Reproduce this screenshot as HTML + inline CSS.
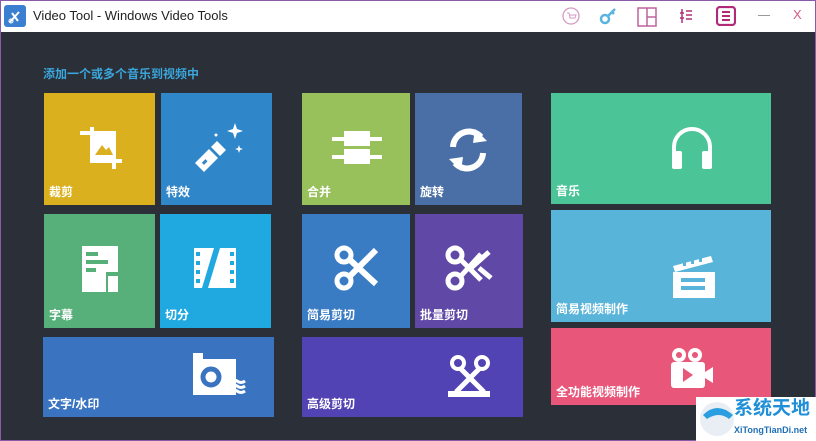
<!DOCTYPE html>
<html><head><meta charset="utf-8"><style>
*{margin:0;padding:0;box-sizing:border-box}
html,body{width:816px;height:441px;overflow:hidden}
body{background:#2b2f37;font-family:"Liberation Sans","Noto Sans CJK SC",sans-serif;position:relative}
#frame{position:absolute;left:0;top:0;width:816px;height:441px;border:1px solid #8a5aa8;pointer-events:none;z-index:9}
#title{position:absolute;left:0;top:0;width:816px;height:32px;background:#fff}
#title .t{position:absolute;left:33px;top:8px;font-size:13px;color:#222}
.tile{position:absolute;color:#fff}
.tile span{position:absolute;left:5px;bottom:5px;font-size:12px;font-weight:bold;white-space:nowrap}
.tile svg{position:absolute}
#head{position:absolute;left:43px;top:65px;color:#3aa6dc;font-size:12px;font-weight:bold}
</style></head><body>
<div id="title">
<svg style="position:absolute;left:4px;top:5px" width="22" height="22"><rect width="22" height="22" rx="3" fill="#3a7fd0"/><path d="M6 17l9-10M8 8l6 8" stroke="#fff" stroke-width="2"/><circle cx="7" cy="16" r="2" fill="none" stroke="#fff"/></svg>
<div class="t">Video Tool - Windows Video Tools</div>
<svg style="position:absolute;left:562px;top:7px" width="18" height="18"><circle cx="9" cy="9" r="8" fill="none" stroke="#d49ac4" stroke-width="1.3"/><path d="M5 6h2l1 5h5l1-3H8" fill="none" stroke="#d49ac4"/></svg>
<svg style="position:absolute;left:598px;top:6px" width="20" height="20"><circle cx="7" cy="13" r="4" fill="none" stroke="#5bb4e0" stroke-width="2.5"/><path d="M10 10l7-7M14 6l2 2" stroke="#5bb4e0" stroke-width="2.5"/></svg>
<svg style="position:absolute;left:637px;top:7px" width="20" height="20"><rect x="1" y="1" width="18" height="18" fill="none" stroke="#c0609e" stroke-width="1.5"/><path d="M10 1v18M10 10h9" stroke="#c0609e" stroke-width="1.5"/></svg>
<svg style="position:absolute;left:679px;top:8px" width="14" height="16"><path d="M3 1v14M7 3h6M7 7h6M7 11h6M1 5h4M1 10h4" stroke="#b0307a" stroke-width="1.5"/></svg>
<svg style="position:absolute;left:716px;top:6px" width="20" height="20"><rect x="1" y="1" width="18" height="18" rx="3" fill="none" stroke="#b02a78" stroke-width="2.2"/><path d="M6 6h8M6 10h8M6 14h8" stroke="#b02a78" stroke-width="2"/></svg>
<div style="position:absolute;left:758px;top:15px;width:12px;height:1px;background:#999"></div>
<div style="position:absolute;left:793px;top:7px;font-size:13px;color:#d06080">X</div>
</div>
<div id="head">添加一个或多个音乐到视频中</div>

<div class="tile" style="left:44px;top:93px;width:111px;height:112px;background:#dbb01e">
<svg style="left:32px;top:32px" width="50" height="50"><path d="M4 6h10V2h4v4h22v28h6v4h-6v6h-4v-6H14V10H4z" fill="#fff"/><path d="M18 10h18v24H18z" fill="#fff"/><path d="M19 30l7-10 4 5 3-3 4 8z" fill="#dbb01e"/></svg><span>裁剪</span></div>
<div class="tile" style="left:161px;top:93px;width:111px;height:112px;background:#2f86c8">
<svg style="left:30px;top:28px" width="56" height="56"><path d="M4 42l14-14 9 9-14 14z" fill="#fff"/><path d="M20 26l6-6 9 9-6 6z" fill="#fff"/><path d="M44 2l2 6 6 2-6 2-2 6-2-6-6-2 6-2z" fill="#fff"/><path d="M48 24l1 3 3 1-3 1-1 3-1-3-3-1 3-1z" fill="#fff"/><circle cx="25" cy="14" r="1.5" fill="#fff"/><rect x="11" y="40" width="5" height="3" fill="#2f86c8" transform="rotate(-45 13 41)"/></svg><span>特效</span></div>
<div class="tile" style="left:302px;top:93px;width:108px;height:112px;background:#98c15c">
<svg style="left:30px;top:38px" width="50" height="36"><rect x="12" y="0" width="26" height="15" fill="#fff"/><rect x="12" y="18" width="26" height="15" fill="#fff"/><rect x="0" y="6" width="50" height="4" fill="#fff"/><rect x="0" y="24" width="50" height="4" fill="#fff"/></svg><span>合并</span></div>
<div class="tile" style="left:415px;top:93px;width:107px;height:112px;background:#4a6fa6">
<svg style="left:26px;top:30px" width="54" height="54"><path d="M12 24a16 16 0 0 1 28-10" fill="none" stroke="#fff" stroke-width="6"/><path d="M34 6l12 12-14 2z" fill="#fff"/><path d="M42 30a16 16 0 0 1-28 10" fill="none" stroke="#fff" stroke-width="6"/><path d="M20 48L8 36l14-2z" fill="#fff"/></svg><span>旋转</span></div>
<div class="tile" style="left:551px;top:93px;width:220px;height:111px;background:#4bc598">
<svg style="left:118px;top:32px" width="46" height="46"><path d="M5 30V22a18 18 0 0 1 36 0v8" fill="none" stroke="#fff" stroke-width="4"/><rect x="3" y="26" width="10" height="18" rx="2" fill="#fff"/><rect x="33" y="26" width="10" height="18" rx="2" fill="#fff"/></svg><span>音乐</span></div>

<div class="tile" style="left:44px;top:214px;width:111px;height:114px;background:#57b07a">
<svg style="left:38px;top:32px" width="36" height="46"><path d="M0 0h36v26H24v20H0z" fill="#fff"/><rect x="26" y="30" width="10" height="16" fill="#fff"/><rect x="4" y="6" width="12" height="4" fill="#57b07a"/><rect x="4" y="14" width="22" height="4" fill="#57b07a"/><rect x="4" y="22" width="10" height="4" fill="#57b07a"/></svg><span>字幕</span></div>
<div class="tile" style="left:160px;top:214px;width:111px;height:114px;background:#20a8e0">
<svg style="left:34px;top:30px" width="42" height="48"><path d="M0 4h20L8 44H0z" fill="#fff"/><path d="M42 4H26l-12 40h28z" fill="#fff"/><path d="M24 0L10 46" stroke="#20a8e0" stroke-width="2"/><g fill="#20a8e0"><rect x="2" y="8" width="4" height="4"/><rect x="2" y="17" width="4" height="4"/><rect x="2" y="26" width="4" height="4"/><rect x="2" y="35" width="4" height="4"/><rect x="36" y="8" width="4" height="4"/><rect x="36" y="17" width="4" height="4"/><rect x="36" y="26" width="4" height="4"/><rect x="36" y="35" width="4" height="4"/></g></svg><span>切分</span></div>
<div class="tile" style="left:302px;top:214px;width:108px;height:114px;background:#3a7cc4">
<svg style="left:32px;top:30px" width="46" height="48"><circle cx="10" cy="11" r="7" fill="none" stroke="#fff" stroke-width="5"/><circle cx="10" cy="37" r="7" fill="none" stroke="#fff" stroke-width="5"/><path d="M15 15L42 40M15 33L42 6" stroke="#fff" stroke-width="6"/></svg><span>简易剪切</span></div>
<div class="tile" style="left:415px;top:214px;width:108px;height:114px;background:#6049a6">
<svg style="left:30px;top:30px" width="50" height="48"><circle cx="10" cy="11" r="7" fill="none" stroke="#fff" stroke-width="5"/><circle cx="10" cy="37" r="7" fill="none" stroke="#fff" stroke-width="5"/><path d="M15 15L36 36M15 33L36 10M26 24L44 8M34 24L46 34" stroke="#fff" stroke-width="5"/></svg><span>批量剪切</span></div>

<div class="tile" style="left:43px;top:337px;width:231px;height:80px;background:#3a73c0">
<svg style="left:150px;top:16px" width="58" height="44"><rect x="0" y="0" width="10" height="6" fill="#fff"/><rect x="0" y="6" width="43" height="36" fill="#fff"/><circle cx="18" cy="24" r="8" fill="none" stroke="#3a73c0" stroke-width="5"/><path d="M36 28q4-3 8 0t8 0M36 33q4-3 8 0t8 0M36 38q4-3 8 0t8 0" fill="none" stroke="#fff" stroke-width="3"/></svg><span>文字/水印</span></div>
<div class="tile" style="left:302px;top:337px;width:221px;height:80px;background:#5243b4">
<svg style="left:146px;top:18px" width="46" height="44"><circle cx="10" cy="8" r="6" fill="none" stroke="#fff" stroke-width="4"/><circle cx="34" cy="8" r="6" fill="none" stroke="#fff" stroke-width="4"/><path d="M12 13l24 24M32 13L8 37" stroke="#fff" stroke-width="5"/><rect x="0" y="36" width="42" height="6" fill="#fff"/></svg><span>高级剪切</span></div>

<div class="tile" style="left:551px;top:210px;width:220px;height:112px;background:#58b4d8">
<svg style="left:120px;top:44px" width="44" height="44"><path d="M2 12l38-10 2 6-38 10z" fill="#fff"/><path d="M2 18h42v26H2z" fill="#fff"/><rect x="10" y="24" width="24" height="4" fill="#58b4d8"/><rect x="10" y="32" width="24" height="4" fill="#58b4d8"/><g fill="#58b4d8"><rect x="12" y="8" width="3" height="4"/><rect x="20" y="6" width="3" height="4"/><rect x="28" y="4" width="3" height="4"/></g></svg><span>简易视频制作</span></div>
<div class="tile" style="left:551px;top:328px;width:220px;height:77px;background:#e8567a">
<svg style="left:118px;top:18px" width="46" height="44"><circle cx="10" cy="9" r="7" fill="#fff"/><circle cx="26" cy="9" r="7" fill="#fff"/><circle cx="10" cy="9" r="3" fill="#e8567a"/><circle cx="26" cy="9" r="3" fill="#e8567a"/><rect x="2" y="16" width="34" height="26" rx="3" fill="#fff"/><path d="M36 26l8-5v16l-8-5z" fill="#fff"/><path d="M14 22l10 7-10 7z" fill="#e8567a"/></svg><span>全功能视频制作</span></div>

<div id="frame"></div>
<div style="position:absolute;left:696px;top:397px;width:120px;height:44px;background:#fff;z-index:10;overflow:hidden">
<svg style="position:absolute;left:1px;top:2px" width="40" height="40"><circle cx="20" cy="20" r="17" fill="#e8eef3"/><path d="M6 16q14-14 30 0l-4 4q-10-8-22 0z" fill="#2a9ee0"/></svg>
<div style="position:absolute;left:38px;top:1px;font-size:19px;line-height:22px;font-weight:bold;color:#1f8fd8;white-space:nowrap">系统天地</div>
<div style="position:absolute;left:38px;top:28px;font-size:9px;font-weight:bold;color:#1f6fb8;white-space:nowrap">XiTongTianDi.net</div>
</div>
</body></html>
